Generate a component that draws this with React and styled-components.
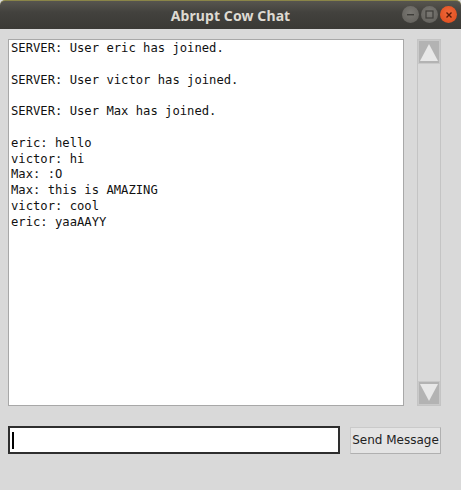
import React from 'react';
import styled, { createGlobalStyle } from 'styled-components';

const GlobalStyle = createGlobalStyle`
  html, body {
    margin: 0;
    padding: 0;
    background: #d9d9d9;
  }
`;

const Window = styled.div`
  width: 461px;
  height: 490px;
  display: flex;
  flex-direction: column;
  background: #d9d9d9;
  overflow: hidden;
`;

const TitleBar = styled.div`
  position: relative;
  height: 29px;
  flex: none;
  display: flex;
  align-items: center;
  justify-content: center;
  background: linear-gradient(#57554f 0%, #43423e 40%, #3a3935 100%);
  border-top: 1px solid #8a8548;
  border-radius: 5px 5px 0 0;
  box-sizing: border-box;
`;

const Title = styled.span`
  font-family: 'Noto Sans', 'DejaVu Sans', sans-serif;
  font-weight: 700;
  font-size: 14px;
  color: #dedad2;
  letter-spacing: 0.1px;
`;

const Controls = styled.div`
  position: absolute;
  right: 4px;
  top: 5px;
  display: flex;
  gap: 2px;
`;

const Circle = styled.div`
  width: 17px;
  height: 17px;
  border-radius: 50%;
  display: flex;
  align-items: center;
  justify-content: center;
  background: ${p => (p.close ? 'radial-gradient(circle at 50% 40%, #f0683a, #dc4a1a)' : 'radial-gradient(circle at 50% 40%, #7a7873, #5f5d58)')};
`;

const Body = styled.div`
  flex: 1;
  display: flex;
  flex-direction: column;
  padding: 10px 20px 0 8px;
`;

const TopRow = styled.div`
  display: flex;
  align-items: stretch;
  gap: 13px;
  height: 367px;
`;

const Log = styled.div`
  flex: 1;
  background: #fff;
  border: 1px solid #a8a8a8;
  padding: 1px 2px;
  font-family: 'DejaVu Sans Mono', monospace;
  font-size: 12.2px;
  line-height: 15.8px;
  color: #111;
  white-space: pre;
  overflow: hidden;
`;

const Scrollbar = styled.div`
  width: 24px;
  display: flex;
  flex-direction: column;
  justify-content: space-between;
  background: #d9d9d9;
  border: 1px solid #c4c4c4;
  box-sizing: border-box;
`;

const Arrow = styled.div`
  height: 22px;
  background: #b3b3b3;
  border: 1px solid #c9c9c9;
  display: flex;
  align-items: center;
  justify-content: center;
`;

const BottomRow = styled.div`
  display: flex;
  align-items: center;
  margin-top: 20px;
  gap: 10px;
`;

const Input = styled.div`
  width: 326px;
  height: 24px;
  background: #fff;
  border: 2px solid #2e2e2e;
  display: flex;
  align-items: center;
  padding-left: 2px;
`;

const Caret = styled.div`
  width: 2px;
  height: 17px;
  background: #000;
`;

const SendButton = styled.div`
  width: 91px;
  height: 27px;
  box-sizing: border-box;
  background: #e4e4e4;
  border: 1px solid #cacaca;
  border-bottom-color: #b0b0b0;
  border-right-color: #b0b0b0;
  display: flex;
  align-items: center;
  justify-content: center;
  white-space: nowrap;
  font-family: 'DejaVu Sans', sans-serif;
  font-size: 12px;
  color: #222;
`;

const lines = [
  'SERVER: User eric has joined.',
  '',
  'SERVER: User victor has joined.',
  '',
  'SERVER: User Max has joined.',
  '',
  'eric: hello',
  'victor: hi',
  'Max: :O',
  'Max: this is AMAZING',
  'victor: cool',
  'eric: yaaAAYY',
];

export default function App() {
  return (
    <Window>
      <GlobalStyle />
      <TitleBar>
        <Title>Abrupt Cow Chat</Title>
        <Controls>
          <Circle>
            <svg width="9" height="9" viewBox="0 0 9 9">
              <rect x="1" y="4" width="7" height="1.4" fill="#3e3d39" />
            </svg>
          </Circle>
          <Circle>
            <svg width="9" height="9" viewBox="0 0 9 9">
              <rect x="1" y="1" width="7" height="7" fill="none" stroke="#3e3d39" strokeWidth="1.2" />
            </svg>
          </Circle>
          <Circle close>
            <svg width="8" height="8" viewBox="0 0 8 8">
              <path d="M1.5 1.5L6.5 6.5M6.5 1.5L1.5 6.5" stroke="#5a1a06" strokeWidth="1.4" />
            </svg>
          </Circle>
        </Controls>
      </TitleBar>
      <Body>
        <TopRow>
          <Log>{lines.join('\n')}</Log>
          <Scrollbar>
            <Arrow>
              <svg width="20" height="18" viewBox="0 0 20 18">
                <polygon points="10,1 19,18 1,18" fill="#e8e8e8" />
              </svg>
            </Arrow>
            <Arrow>
              <svg width="20" height="18" viewBox="0 0 20 18">
                <polygon points="1,0 19,0 10,17" fill="#e8e8e8" />
              </svg>
            </Arrow>
          </Scrollbar>
        </TopRow>
        <BottomRow>
          <Input>
            <Caret />
          </Input>
          <SendButton>Send Message</SendButton>
        </BottomRow>
      </Body>
    </Window>
  );
}
